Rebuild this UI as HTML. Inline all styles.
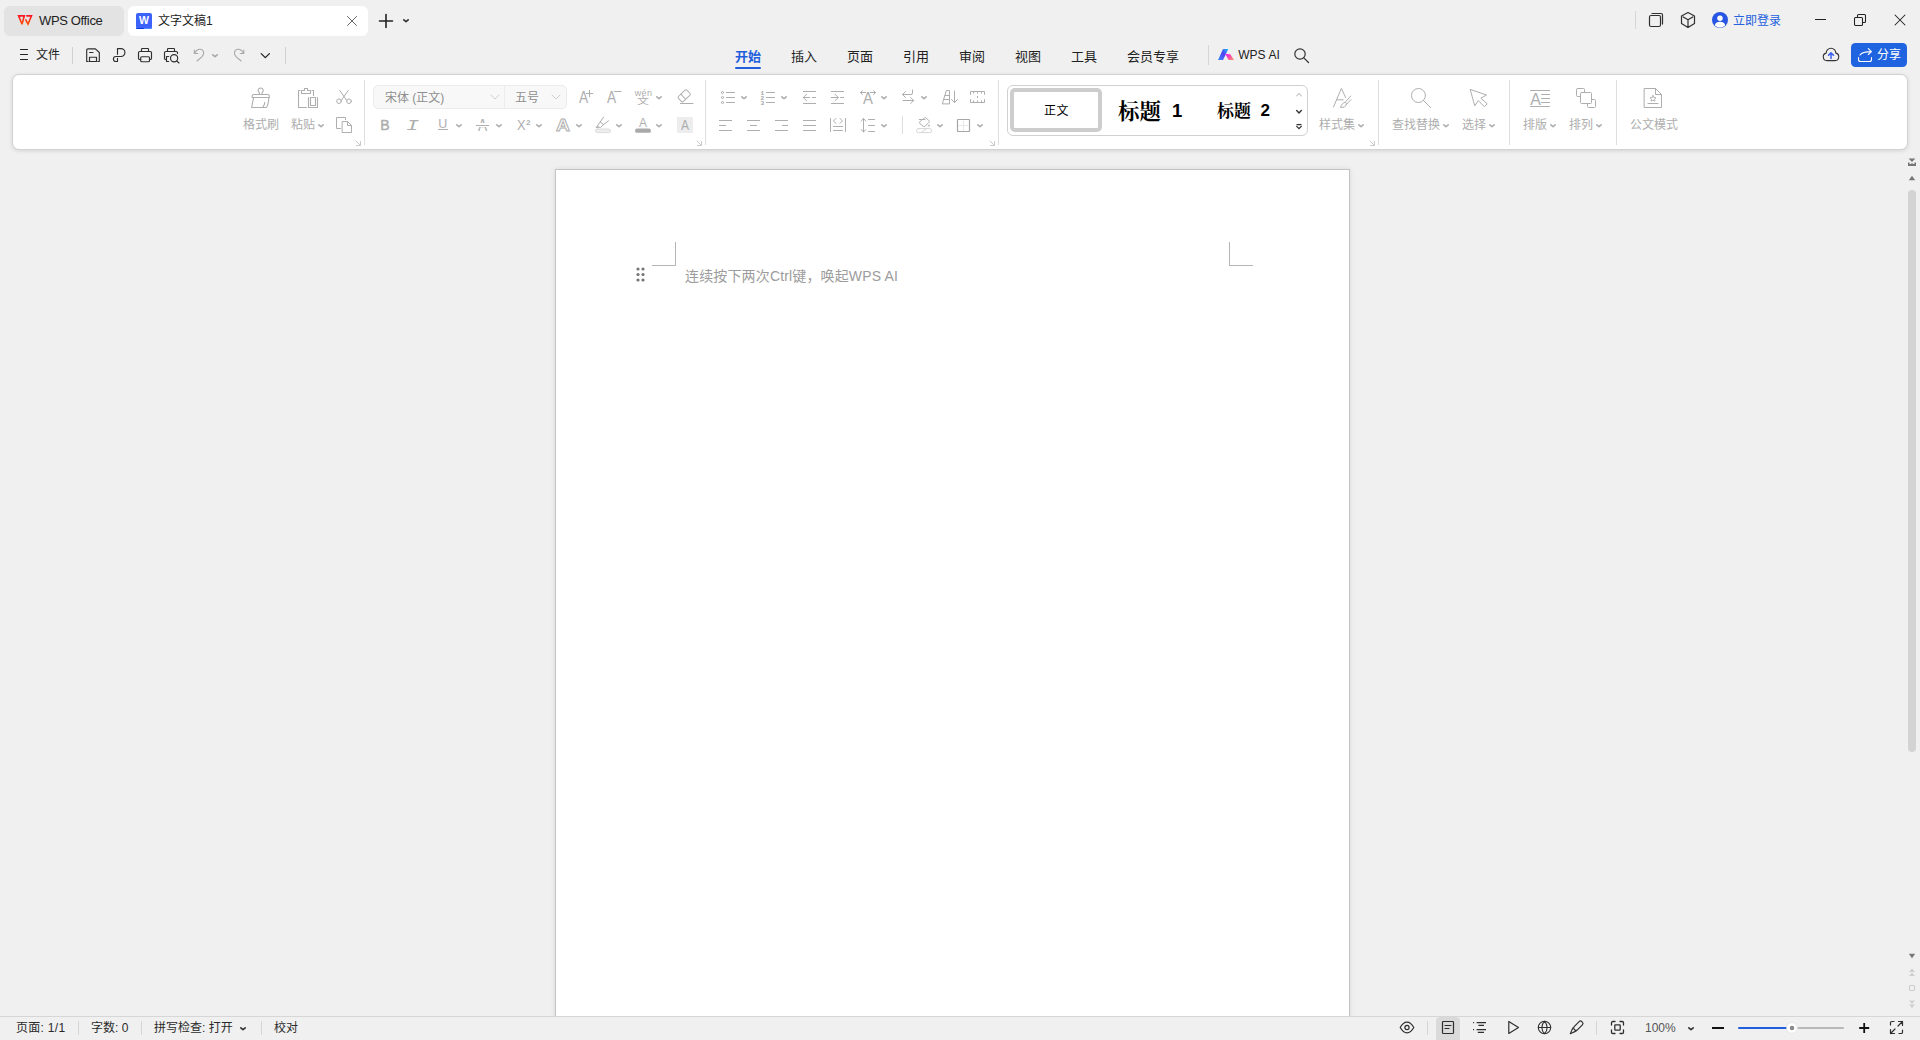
<!DOCTYPE html>
<html lang="zh-CN"><head><meta charset="utf-8"><title>文字文稿1 - WPS Office</title>
<style>
html,body{margin:0;padding:0;}
body{width:1920px;height:1040px;overflow:hidden;background:#f0f0f0;position:relative;font-family:"Liberation Sans","Noto Sans CJK SC",sans-serif;}
.t{position:absolute;white-space:nowrap;display:block;}
.i{position:absolute;display:block;overflow:visible;}
.b{position:absolute;box-sizing:content-box;}
</style></head><body>
<div class="b" style="left:4px;top:6px;width:120px;height:30px;background:#e3e3e3;border-radius:6px;"></div>
<svg class="i" style="left:17px;top:15px;" width="16" height="11" viewBox="0 0 16 11" fill="none" stroke="#f5271d" stroke-width="1" stroke-linecap="round" stroke-linejoin="round"><defs><linearGradient id="wl" x1="0" y1="0" x2="0" y2="1"><stop offset="0" stop-color="#ff1524"/><stop offset="1" stop-color="#ff5200"/></linearGradient></defs><path d="M1.6 0.9 H7.3 L5 9.2 Z" stroke="url(#wl)" stroke-width="1.6" stroke-linejoin="miter" stroke-miterlimit="3" stroke-linecap="butt"/><path d="M9.2 0.9 H14.5 L11 9.2 L8.5 4.4" stroke="url(#wl)" stroke-width="1.6" stroke-linejoin="miter" stroke-miterlimit="3" stroke-linecap="butt"/></svg>
<span class="t" style="left:39px;top:11.0px;font-size:13px;line-height:19px;color:#222;letter-spacing:-.35px;">WPS Office</span>
<div class="b" style="left:128px;top:6px;width:240px;height:30px;background:#ffffff;border-radius:6px;"></div>
<div class="b" style="left:136px;top:13px;width:16px;height:16px;background:#3d62fa;border-radius:2px;"></div>
<div class="b" style="left:136px;top:27.5px;width:8px;height:1.5px;background:#0a3be0;border-radius:0 0 0 2px;"></div>
<div class="b" style="left:144px;top:27.5px;width:8px;height:1.5px;background:#4f88ff;border-radius:0 0 2px 0;"></div>
<span class="t" style="left:136px;top:14.0px;font-size:10.5px;line-height:12px;color:#fff;font-weight:700;width:16px;text-align:center;">W</span>
<span class="t" style="left:158px;top:11.5px;font-size:12px;line-height:18px;color:#222;">文字文稿1</span>
<svg class="i" style="left:345.7px;top:14.5px;" width="12" height="12" viewBox="0 0 12 12" fill="none" stroke="#666" stroke-width="1" stroke-linecap="round" stroke-linejoin="round"><path d="M1.5 1.5 L10.5 10.5 M10.5 1.5 L1.5 10.5"/></svg>
<svg class="i" style="left:378px;top:13px;" width="16" height="16" viewBox="0 0 16 16" fill="none" stroke="#222" stroke-width="1.6" stroke-linecap="round" stroke-linejoin="round"><path d="M8 1.5 V14.5 M1.5 8 H14.5"/></svg>
<svg class="i" style="left:402px;top:18px;" width="8" height="6" viewBox="0 0 8 6" fill="none" stroke="#333" stroke-width="1.7000000000000002" stroke-linecap="round" stroke-linejoin="round"><path d="M1.85 1.85 L4.0 3.55 L6.15 1.85"/></svg>
<div class="b" style="left:1635px;top:11px;width:1px;height:18px;background:#d6d6d6;"></div>
<svg class="i" style="left:1648px;top:12px;" width="16" height="16" viewBox="0 0 16 16" fill="none" stroke="#2f2f2f" stroke-width="1.2" stroke-linecap="round" stroke-linejoin="round"><rect x="1.5" y="3.5" width="11" height="11" rx="1.5"/><path d="M4 1.5 H13 A1.5 1.5 0 0 1 14.5 3 V12"/></svg>
<svg class="i" style="left:1680px;top:11px;" width="16" height="18" viewBox="0 0 16 18" fill="none" stroke="#2f2f2f" stroke-width="1.2" stroke-linecap="round" stroke-linejoin="round"><path d="M8 1.5 L14.5 5 V12.5 L8 16.5 L1.5 12.5 V5 Z M3.2 5.9 L8 8.7 L12.8 5.9 M8 8.7 V16.5"/></svg>
<svg class="i" style="left:1712px;top:12px;" width="16" height="16" viewBox="0 0 16 16" fill="none" stroke="none" stroke-width="1" stroke-linecap="round" stroke-linejoin="round"><circle cx="8" cy="8" r="8" fill="#2856e3" stroke="none"/><circle cx="8" cy="6.2" r="2.7" fill="#fff" stroke="none"/><path d="M2.8 13.2 C3.5 10.6 5.5 9.8 8 9.8 C10.5 9.8 12.5 10.6 13.2 13.2 C11.8 14.8 10 15.5 8 15.5 C6 15.5 4.2 14.8 2.8 13.2 Z" fill="#fff" stroke="none"/></svg>
<span class="t" style="left:1733px;top:11.600000000000001px;font-size:12px;line-height:18px;color:#2462de;">立即登录</span>
<div class="b" style="left:1815px;top:19px;width:11px;height:1px;background:#222;"></div>
<svg class="i" style="left:1853px;top:13px;" width="14" height="14" viewBox="0 0 14 14" fill="none" stroke="#222" stroke-width="1.05" stroke-linecap="round" stroke-linejoin="round"><rect x="1.5" y="4.5" width="8" height="8" rx="1"/><path d="M4.5 4.5 V2.5 A1 1 0 0 1 5.5 1.5 H11.5 A1 1 0 0 1 12.5 2.5 V8.5 A1 1 0 0 1 11.5 9.5 H9.5"/></svg>
<svg class="i" style="left:1894px;top:14px;" width="12" height="12" viewBox="0 0 12 12" fill="none" stroke="#222" stroke-width="1.05" stroke-linecap="round" stroke-linejoin="round"><path d="M1 1 L11 11 M11 1 L1 11"/></svg>
<svg class="i" style="left:18px;top:48px;" width="12" height="14" viewBox="0 0 12 14" fill="none" stroke="#222" stroke-width="1.1" stroke-linecap="round" stroke-linejoin="round"><path d="M2.5 1.5 H9.5 M2.5 6.5 H9.5 M2.5 11.5 H9.5"/></svg>
<span class="t" style="left:36px;top:46.0px;font-size:12px;line-height:18px;color:#222;">文件</span>
<div class="b" style="left:72px;top:47px;width:1px;height:17px;background:#d0d0d0;"></div>
<svg class="i" style="left:85px;top:47px;" width="16" height="16" viewBox="0 0 16 16" fill="none" stroke="#2f2f2f" stroke-width="1.15" stroke-linecap="round" stroke-linejoin="round"><path d="M3.2 14.5 H1.7 V3.2 A1.3 1.3 0 0 1 3 1.9 H10.4 L14.3 5.5 V14.5 H12.8 M4.6 5.5 H8 M4.5 14.5 V10.2 H11.5 V14.5 Z"/></svg>
<svg class="i" style="left:112px;top:47px;" width="14" height="16" viewBox="0 0 14 16" fill="none" stroke="#2f2f2f" stroke-width="1.15" stroke-linecap="round" stroke-linejoin="round"><path d="M5.5 7.3 V1.6 H9 A3.95 3.95 0 0 1 9 9.5 H3.9 A2.5 2.5 0 0 0 3.9 14.5 H5.5 V11.3"/></svg>
<svg class="i" style="left:137px;top:47px;" width="16" height="16" viewBox="0 0 16 16" fill="none" stroke="#2f2f2f" stroke-width="1.15" stroke-linecap="round" stroke-linejoin="round"><path d="M4.5 4.5 V2.3 A.8 .8 0 0 1 5.3 1.5 H10.7 A.8 .8 0 0 1 11.5 2.3 V4.5 M3.7 12.5 H2.8 A1.3 1.3 0 0 1 1.5 11.2 V5.8 A1.3 1.3 0 0 1 2.8 4.5 H13.2 A1.3 1.3 0 0 1 14.5 5.8 V11.2 A1.3 1.3 0 0 1 13.2 12.5 H12.5"/><rect x="3.7" y="9.7" width="8.8" height="5" rx="1"/></svg>
<svg class="i" style="left:163px;top:47px;" width="17" height="16" viewBox="0 0 17 16" fill="none" stroke="#2f2f2f" stroke-width="1.15" stroke-linecap="round" stroke-linejoin="round"><path d="M4.5 4.5 V2.3 A.8 .8 0 0 1 5.3 1.5 H10.7 A.8 .8 0 0 1 11.5 2.3 V4.5 M3 12.5 H2.8 A1.3 1.3 0 0 1 1.5 11.2 V5.8 A1.3 1.3 0 0 1 2.8 4.5 H13.2 A1.3 1.3 0 0 1 14.5 5.8 V6.6 M5.7 9.5 H3.5 V14.5 H5.7"/><circle cx="11.1" cy="11.2" r="3.6"/><path d="M13.8 14 L16 16"/></svg>
<svg class="i" style="left:193px;top:48px;" width="12" height="14" viewBox="0 0 12 14" fill="none" stroke="#a8a8a8" stroke-width="1.1" stroke-linecap="round" stroke-linejoin="round"><path d="M1.3 2 V5.5 H4.8 M1.8 5.2 C3 2.6 5 1.3 6.8 1.3 C9.2 1.3 10.6 3.2 10.6 5.3 C10.6 6.8 9.8 7.8 8.8 8.8 L4 13"/></svg>
<svg class="i" style="left:211px;top:53px;" width="8" height="6" viewBox="0 0 8 6" fill="none" stroke="#a8a8a8" stroke-width="1.6" stroke-linecap="round" stroke-linejoin="round"><path d="M1.8 1.8 L4.0 3.6 L6.2 1.8"/></svg>
<svg class="i" style="left:233px;top:48px;" width="12" height="14" viewBox="0 0 12 14" fill="none" stroke="#a8a8a8" stroke-width="1.1" stroke-linecap="round" stroke-linejoin="round"><path d="M10.8 2 V5.5 H7.3 M10.3 5.2 C9.1 2.6 7.1 1.3 5.3 1.3 C2.9 1.3 1.5 3.2 1.5 5.3 C1.5 6.8 2.3 7.8 3.3 8.8 L8.1 13"/></svg>
<svg class="i" style="left:259px;top:51px;" width="12" height="8" viewBox="0 0 12 8" fill="none" stroke="#222" stroke-width="1.3" stroke-linecap="round" stroke-linejoin="round"><path d="M2.2 2.6 L6.3 6.6 L10.4 2.6"/></svg>
<div class="b" style="left:285px;top:47px;width:1px;height:17px;background:#d0d0d0;"></div>
<span class="t" style="left:735px;top:46.5px;font-size:13px;line-height:19px;color:#1f5fdd;font-weight:700;">开始</span>
<span class="t" style="left:791px;top:46.5px;font-size:13px;line-height:19px;color:#222;">插入</span>
<span class="t" style="left:847px;top:46.5px;font-size:13px;line-height:19px;color:#222;">页面</span>
<span class="t" style="left:903px;top:46.5px;font-size:13px;line-height:19px;color:#222;">引用</span>
<span class="t" style="left:959px;top:46.5px;font-size:13px;line-height:19px;color:#222;">审阅</span>
<span class="t" style="left:1015px;top:46.5px;font-size:13px;line-height:19px;color:#222;">视图</span>
<span class="t" style="left:1071px;top:46.5px;font-size:13px;line-height:19px;color:#222;">工具</span>
<span class="t" style="left:1127px;top:46.5px;font-size:13px;line-height:19px;color:#222;">会员专享</span>
<div class="b" style="left:735px;top:67px;width:26px;height:2px;background:#1f5fdd;border-radius:1px;"></div>
<div class="b" style="left:1208px;top:45px;width:1px;height:20px;background:#d6d6d6;"></div>
<svg class="i" style="left:1217px;top:47px;" width="18" height="15" viewBox="0 0 18 15" fill="none" stroke="none" stroke-width="1" stroke-linecap="round" stroke-linejoin="round"><defs><linearGradient id="ai0" x1="0" y1="1" x2="1" y2="0"><stop offset="0" stop-color="#3a8dff"/><stop offset=".55" stop-color="#5140f2"/><stop offset="1" stop-color="#12c0ff"/></linearGradient><linearGradient id="ai1" x1="0" y1="0" x2="1" y2="1"><stop offset="0" stop-color="#f50cf0"/><stop offset="1" stop-color="#ff9460"/></linearGradient></defs><path d="M1 13 L6 2 H11.3 L6 13 Z" fill="url(#ai0)" stroke="none"/><path d="M8.4 7 L13.3 7.3 L17 13 H11.6 Z" fill="url(#ai1)" stroke="none"/></svg>
<span class="t" style="left:1238.2px;top:46.0px;font-size:12px;line-height:18px;color:#222;word-spacing:.2px;">WPS AI</span>
<svg class="i" style="left:1293px;top:47px;" width="17" height="17" viewBox="0 0 17 17" fill="none" stroke="#333" stroke-width="1.2" stroke-linecap="round" stroke-linejoin="round"><circle cx="7" cy="7" r="5.2"/><path d="M10.8 10.8 L15.5 15.5"/></svg>
<svg class="i" style="left:1822px;top:47px;" width="18" height="15" viewBox="0 0 18 15" fill="none" stroke="#333" stroke-width="1.1" stroke-linecap="round" stroke-linejoin="round"><path d="M5 13.6 A3.8 3.8 0 0 1 4.2 6.1 A4.8 4.8 0 1 1 13.8 6.1 A3.8 3.8 0 0 1 13 13.6 Z" stroke="#333"/><path d="M9 11.6 V6.4 M6.5 8.3 L9 5.8 L11.5 8.3" stroke="#3b5cf0" stroke-width="1.5"/></svg>
<div class="b" style="left:1851px;top:43px;width:56px;height:24px;background:#1f63e0;border-radius:4.5px;"></div>
<svg class="i" style="left:1857px;top:48px;" width="16" height="15" viewBox="0 0 16 15" fill="none" stroke="#fff" stroke-width="1.1" stroke-linecap="round" stroke-linejoin="round"><path d="M1.5 9.5 V11.5 A2 2 0 0 0 3.5 13.5 H12.5 A2 2 0 0 0 14.5 11.5 V9.5 M3 7 C4.6 4.6 8 3.6 14 3.6 M11.3 0.7 L14.4 3.6 L11.3 6.5"/></svg>
<span class="t" style="left:1877px;top:46.0px;font-size:12px;line-height:18px;color:#fff;">分享</span>
<div class="b" style="left:12px;top:74px;width:1894px;height:74px;background:#fff;border:1px solid #d2d2d2;border-radius:7px;box-shadow:0 1px 4px rgba(0,0,0,.12);"></div>
<svg class="i" style="left:250px;top:87px;" width="22" height="22" viewBox="0 0 22 22" fill="none" stroke="#aeaeae" stroke-width="1.1" stroke-linecap="round" stroke-linejoin="round"><path d="M9.4 7.5 V5.6 A2.5 2.5 0 1 1 12 5.6 V7.5 M3.5 7.5 H18 A1.3 1.3 0 0 1 19.3 8.8 V10.5 H2.2 V8.8 A1.3 1.3 0 0 1 3.5 7.5 Z M6 10.5 H15.5 M3.6 10.5 L1.6 20.5 H16.4 C18 18.4 18.6 15 18.8 10.5 M12.6 20.5 C14 19 14.6 17.4 14.8 15.4"/></svg>
<span class="t" style="left:243px;top:116.0px;font-size:12px;line-height:18px;color:#adadad;">格式刷</span>
<svg class="i" style="left:297px;top:87px;" width="22" height="22" viewBox="0 0 22 22" fill="none" stroke="#aeaeae" stroke-width="1.1" stroke-linecap="round" stroke-linejoin="round"><path d="M3 3.5 H1.5 V20.5 H9.5 M15 3.5 H16.5 V8.5 M4.5 6.5 V3.5 H7.5 V1.5 H10.5 V3.5 H13.5 V6.5 Z M11.5 10.5 V20.5 H20.5 V10.5"/><rect x="13.5" y="10.5" width="5" height="8"/></svg>
<span class="t" style="left:291px;top:116.0px;font-size:12px;line-height:18px;color:#adadad;">粘贴</span>
<svg class="i" style="left:317px;top:122.5px;" width="8" height="6" viewBox="0 0 8 6" fill="none" stroke="#aeaeae" stroke-width="1.6" stroke-linecap="round" stroke-linejoin="round"><path d="M1.8 1.8 L4.0 3.6 L6.2 1.8"/></svg>
<svg class="i" style="left:335px;top:89px;" width="18" height="16" viewBox="0 0 18 16" fill="none" stroke="#aeaeae" stroke-width="1" stroke-linecap="round" stroke-linejoin="round"><path d="M4.8 1.5 L11.6 11.2 M13.2 1.5 L6.4 11.2"/><circle cx="4" cy="12.2" r="2.3"/><circle cx="14" cy="12.2" r="2.3"/></svg>
<svg class="i" style="left:335px;top:116px;" width="18" height="18" viewBox="0 0 18 18" fill="none" stroke="#aeaeae" stroke-width="1" stroke-linecap="round" stroke-linejoin="round"><path d="M5.5 12.5 H1.5 V1.5 H10.5 V3.5"/><path d="M7.5 5.5 H12.5 L16.5 9.5 V16.5 H7.5 Z M12.5 5.5 V9.5 H16.5"/></svg>
<svg class="i" style="left:355px;top:140px;" width="6" height="6" viewBox="0 0 6 6" fill="none" stroke="#c4c4c4" stroke-width="0.9" stroke-linecap="round" stroke-linejoin="round"><path d="M1 1 L5 5 M5.5 1.5 V5.5 H1.5"/></svg>
<div class="b" style="left:364px;top:80px;width:1px;height:65px;background:#dedede;"></div>
<div class="b" style="left:373px;top:85px;width:192px;height:22px;background:#f8f8f8;border:1px solid #ebebeb;border-radius:5px;"></div>
<div class="b" style="left:504px;top:86px;width:1px;height:22px;background:#ececec;"></div>
<span class="t" style="left:385px;top:89.0px;font-size:12px;line-height:18px;color:#8e8e8e;">宋体 (正文)</span>
<svg class="i" style="left:490px;top:94px;" width="10" height="6" viewBox="0 0 10 6" fill="none" stroke="#cfcfcf" stroke-width="1" stroke-linecap="round" stroke-linejoin="round"><path d="M1 1 L5 5 L9 1"/></svg>
<span class="t" style="left:515px;top:89.0px;font-size:12px;line-height:18px;color:#8e8e8e;">五号</span>
<svg class="i" style="left:551px;top:94px;" width="10" height="6" viewBox="0 0 10 6" fill="none" stroke="#cfcfcf" stroke-width="1" stroke-linecap="round" stroke-linejoin="round"><path d="M1 1 L5 5 L9 1"/></svg>
<span class="t" style="left:578.8px;top:87.75px;font-size:16.5px;line-height:18.5px;color:#aeaeae;transform:scaleX(0.83);transform-origin:left center;">A</span>
<svg class="i" style="left:586px;top:90px;" width="8" height="8" viewBox="0 0 8 8" fill="none" stroke="#aeaeae" stroke-width="1" stroke-linecap="round" stroke-linejoin="round"><path d="M0.5 3.5 H6.8 M3.5 0.3 V6.8"/></svg>
<span class="t" style="left:606.8px;top:87.75px;font-size:16.5px;line-height:18.5px;color:#aeaeae;transform:scaleX(0.83);transform-origin:left center;">A</span>
<svg class="i" style="left:614px;top:89px;" width="8" height="4" viewBox="0 0 8 4" fill="none" stroke="#aeaeae" stroke-width="1" stroke-linecap="round" stroke-linejoin="round"><path d="M0.5 2.5 H7"/></svg>
<span class="t" style="left:637px;top:95.0px;font-size:12px;line-height:12px;color:#aeaeae;transform:scaleY(.74);">文</span>
<span class="t" style="left:634.8px;top:87.8px;font-size:9px;line-height:10px;color:#aeaeae;letter-spacing:.3px;">wén</span>
<svg class="i" style="left:655px;top:95px;" width="8" height="6" viewBox="0 0 8 6" fill="none" stroke="#aeaeae" stroke-width="1.6" stroke-linecap="round" stroke-linejoin="round"><path d="M1.8 1.8 L4.0 3.6 L6.2 1.8"/></svg>
<svg class="i" style="left:676px;top:89px;" width="18" height="16" viewBox="0 0 18 16" fill="none" stroke="#aeaeae" stroke-width="1" stroke-linecap="round" stroke-linejoin="round"><g transform="rotate(-43 8.2 6.8)"><rect x="2.3" y="3.3" width="11.8" height="7" rx="1.5"/><path d="M6.9 3.3 V10.3"/></g><path d="M4.5 14.5 H17"/></svg>
<span class="t" style="left:380.3px;top:116.8px;font-size:14px;line-height:16px;color:#aeaeae;-webkit-text-stroke:.5px #aeaeae;">B</span>
<span class="t" style="left:405.5px;top:118.5px;font-size:15px;line-height:16px;color:#aeaeae;font-family:'Liberation Mono',monospace;font-style:italic;transform:scaleX(1.45);transform-origin:left center;">I</span>
<span class="t" style="left:438.3px;top:117.1px;font-size:12.5px;line-height:14px;color:#aeaeae;">U</span>
<div class="b" style="left:438px;top:129px;width:10px;height:1px;background:#aeaeae;"></div>
<svg class="i" style="left:455px;top:122.5px;" width="8" height="6" viewBox="0 0 8 6" fill="none" stroke="#aeaeae" stroke-width="1.6" stroke-linecap="round" stroke-linejoin="round"><path d="M1.8 1.8 L4.0 3.6 L6.2 1.8"/></svg>
<span class="t" style="left:477.9px;top:115.75px;font-size:16.5px;line-height:18.5px;color:#aeaeae;transform:scaleX(0.83);transform-origin:left center;">A</span>
<div class="b" style="left:475px;top:123px;width:15px;height:4px;background:#fff;"></div>
<div class="b" style="left:476px;top:124.5px;width:13px;height:1px;background:#aeaeae;"></div>
<svg class="i" style="left:495px;top:122.5px;" width="8" height="6" viewBox="0 0 8 6" fill="none" stroke="#aeaeae" stroke-width="1.6" stroke-linecap="round" stroke-linejoin="round"><path d="M1.8 1.8 L4.0 3.6 L6.2 1.8"/></svg>
<span class="t" style="left:517px;top:117.3px;font-size:15.5px;line-height:16px;color:#aeaeae;transform:scaleX(.82);transform-origin:left center;">X</span>
<span class="t" style="left:526.2px;top:118.1px;font-size:7.5px;line-height:9px;color:#aeaeae;font-weight:700;">2</span>
<svg class="i" style="left:535px;top:122.5px;" width="8" height="6" viewBox="0 0 8 6" fill="none" stroke="#aeaeae" stroke-width="1.6" stroke-linecap="round" stroke-linejoin="round"><path d="M1.8 1.8 L4.0 3.6 L6.2 1.8"/></svg>
<svg class="i" style="left:554px;top:116px" width="18" height="18"><text x="7.9" y="14.6" text-anchor="middle" font-family="Liberation Sans,sans-serif" font-weight="700" font-size="17" fill="#fff" stroke="#aeaeae" stroke-width="0.9" transform="scale(1.14 1)">A</text></svg>
<svg class="i" style="left:575px;top:122.5px;" width="8" height="6" viewBox="0 0 8 6" fill="none" stroke="#aeaeae" stroke-width="1.6" stroke-linecap="round" stroke-linejoin="round"><path d="M1.8 1.8 L4.0 3.6 L6.2 1.8"/></svg>
<svg class="i" style="left:594px;top:116px;" width="18" height="18" viewBox="0 0 18 18" fill="none" stroke="#aeaeae" stroke-width="1" stroke-linecap="round" stroke-linejoin="round"><path d="M3 10.5 L6.2 6 L9.6 8.6 L6.8 11.2 Z M6.2 6 L9.5 1.2 M9.6 8.6 L14.5 4.8 M2.2 11.6 L4.4 11"/><rect x="1.5" y="13" width="15" height="3.6" rx="1.8" fill="#ededed" stroke="#dcdcdc"/></svg>
<svg class="i" style="left:615px;top:122.5px;" width="8" height="6" viewBox="0 0 8 6" fill="none" stroke="#aeaeae" stroke-width="1.6" stroke-linecap="round" stroke-linejoin="round"><path d="M1.8 1.8 L4.0 3.6 L6.2 1.8"/></svg>
<svg class="i" style="left:634px;top:116px;" width="18" height="18" viewBox="0 0 18 18" fill="none" stroke="#aeaeae" stroke-width="1" stroke-linecap="round" stroke-linejoin="round"><rect x="1.2" y="12.6" width="15.6" height="4.2" rx="1.6" fill="#a9a9a9" stroke="none"/></svg>
<span class="t" style="left:639px;top:114.5px;font-size:13px;line-height:15px;color:#aeaeae;transform:scaleX(0.92);transform-origin:left center;">A</span>
<svg class="i" style="left:655px;top:122.5px;" width="8" height="6" viewBox="0 0 8 6" fill="none" stroke="#aeaeae" stroke-width="1.6" stroke-linecap="round" stroke-linejoin="round"><path d="M1.8 1.8 L4.0 3.6 L6.2 1.8"/></svg>
<div class="b" style="left:677px;top:117px;width:16px;height:16px;background:#ededed;"></div>
<span class="t" style="left:681px;top:117.0px;font-size:14px;line-height:16px;color:#aeaeae;transform:scaleX(0.86);transform-origin:left center;">A</span>
<svg class="i" style="left:696px;top:140px;" width="6" height="6" viewBox="0 0 6 6" fill="none" stroke="#c4c4c4" stroke-width="0.9" stroke-linecap="round" stroke-linejoin="round"><path d="M1 1 L5 5 M5.5 1.5 V5.5 H1.5"/></svg>
<div class="b" style="left:705px;top:80px;width:1px;height:65px;background:#dedede;"></div>
<svg class="i" style="left:720px;top:90px;" width="16" height="16" viewBox="0 0 16 16" fill="none" stroke="#aeaeae" stroke-width="1" stroke-linecap="round" stroke-linejoin="round"><circle cx="2.5" cy="2.5" r="1.1"/><circle cx="2.5" cy="7.5" r="1.1"/><circle cx="2.5" cy="12.5" r="1.1"/><path d="M6 2.5 H15 M6 7.5 H15 M6 12.5 H15" stroke-linecap="butt"/></svg>
<svg class="i" style="left:740px;top:95px;" width="8" height="6" viewBox="0 0 8 6" fill="none" stroke="#aeaeae" stroke-width="1.6" stroke-linecap="round" stroke-linejoin="round"><path d="M1.8 1.8 L4.0 3.6 L6.2 1.8"/></svg>
<svg class="i" style="left:760px;top:90px;" width="16" height="16" viewBox="0 0 16 16" fill="none" stroke="#aeaeae" stroke-width="1" stroke-linecap="round" stroke-linejoin="round"><path d="M6 2.5 H15 M6 7.5 H15 M6 12.5 H15" stroke-linecap="butt"/><g font-family="Liberation Mono,monospace" font-weight="700" font-size="6.2" fill="#a4a4a4" stroke="none"><text x="0.6" y="4.6">1</text><text x="0.6" y="9.6">2</text><text x="0.6" y="14.6">3</text></g></svg>
<svg class="i" style="left:780px;top:95px;" width="8" height="6" viewBox="0 0 8 6" fill="none" stroke="#aeaeae" stroke-width="1.6" stroke-linecap="round" stroke-linejoin="round"><path d="M1.8 1.8 L4.0 3.6 L6.2 1.8"/></svg>
<svg class="i" style="left:802px;top:90px;" width="16" height="16" viewBox="0 0 16 16" fill="none" stroke="#aeaeae" stroke-width="1" stroke-linecap="round" stroke-linejoin="round"><path d="M1 1.5 H14 M1 13.5 H14 M10 7.5 H14" stroke-linecap="butt"/><path d="M7.6 7.5 H1.4 M4.6 4.2 L1.3 7.5 L4.6 10.8"/></svg>
<svg class="i" style="left:830px;top:90px;" width="16" height="16" viewBox="0 0 16 16" fill="none" stroke="#aeaeae" stroke-width="1" stroke-linecap="round" stroke-linejoin="round"><path d="M1 1.5 H14 M1 13.5 H14 M10.2 7.5 H14" stroke-linecap="butt"/><path d="M1.2 7.5 H8.2 M5 4.2 L8.3 7.5 L5 10.8"/></svg>
<svg class="i" style="left:859px;top:89px;" width="18" height="16" viewBox="0 0 18 16" fill="none" stroke="#aeaeae" stroke-width="1" stroke-linecap="round" stroke-linejoin="round"><path d="M1.5 3.5 H6.5 M3.3 1.7 L1.5 3.5 L3.3 5.3 M11.5 3.5 H16.5 M14.7 1.7 L16.5 3.5 L14.7 5.3"/></svg>
<span class="t" style="left:863px;top:89.8px;font-size:16.5px;line-height:17px;color:#aeaeae;transform:scaleX(.9);transform-origin:left center;">A</span>
<svg class="i" style="left:880px;top:95px;" width="8" height="6" viewBox="0 0 8 6" fill="none" stroke="#aeaeae" stroke-width="1.6" stroke-linecap="round" stroke-linejoin="round"><path d="M1.8 1.8 L4.0 3.6 L6.2 1.8"/></svg>
<svg class="i" style="left:901px;top:89px;" width="15" height="16" viewBox="0 0 15 16" fill="none" stroke="#aeaeae" stroke-width="1" stroke-linecap="round" stroke-linejoin="round"><path d="M11.5 1 V4 A1.5 1.5 0 0 1 10 5.5 H1.5 M4.5 2.5 L1.5 5.5 L4.5 8.5 M2 11.5 H12.7 M9.7 8.5 L12.7 11.5 L9.7 14.5"/></svg>
<svg class="i" style="left:920px;top:95px;" width="8" height="6" viewBox="0 0 8 6" fill="none" stroke="#aeaeae" stroke-width="1.6" stroke-linecap="round" stroke-linejoin="round"><path d="M1.8 1.8 L4.0 3.6 L6.2 1.8"/></svg>
<svg class="i" style="left:941px;top:89px;" width="18" height="16" viewBox="0 0 18 16" fill="none" stroke="#aeaeae" stroke-width="1" stroke-linecap="round" stroke-linejoin="round"><path d="M1.4 14.5 L5.3 1.5 H8.5 V14.5 Z M4.2 6.5 H8.5 M2.8 10.5 H8.5 M13.5 2 V13.5 M10.5 10.5 L13.5 13.6 L16.5 10.5"/></svg>
<svg class="i" style="left:969px;top:90px;" width="17" height="14" viewBox="0 0 17 14" fill="none" stroke="#aeaeae" stroke-width="1" stroke-linecap="round" stroke-linejoin="round"><path d="M1.5 4.8 V1.5 H15.5 V4.8 M4.5 1.5 V3.5 M8.5 1.5 V3.5 M12.5 1.5 V3.5 M1.5 9.2 V12.5 H15.5 V9.2 M4.5 12.5 V10.5 M8.5 12.5 V10.5 M12.5 12.5 V10.5 M8.5 6 V8" stroke-linecap="butt" stroke-linejoin="miter"/></svg>
<svg class="i" style="left:718px;top:119px;" width="16" height="13" viewBox="0 0 16 13" fill="none" stroke="#aeaeae" stroke-width="1" stroke-linecap="round" stroke-linejoin="round"><path d="M1 1.5 H14 M1 6.5 H8 M1 11.5 H14 " stroke-linecap="butt"/></svg>
<svg class="i" style="left:746px;top:119px;" width="16" height="13" viewBox="0 0 16 13" fill="none" stroke="#aeaeae" stroke-width="1" stroke-linecap="round" stroke-linejoin="round"><path d="M1 1.5 H14 M4 6.5 H11 M1 11.5 H14 " stroke-linecap="butt"/></svg>
<svg class="i" style="left:774px;top:119px;" width="16" height="13" viewBox="0 0 16 13" fill="none" stroke="#aeaeae" stroke-width="1" stroke-linecap="round" stroke-linejoin="round"><path d="M1 1.5 H14 M8 6.5 H14 M1 11.5 H14 " stroke-linecap="butt"/></svg>
<svg class="i" style="left:802px;top:119px;" width="16" height="13" viewBox="0 0 16 13" fill="none" stroke="#aeaeae" stroke-width="1" stroke-linecap="round" stroke-linejoin="round"><path d="M1 1.5 H14 M1 6.5 H14 M1 11.5 H14 " stroke-linecap="butt"/></svg>
<svg class="i" style="left:829px;top:117px;" width="18" height="16" viewBox="0 0 18 16" fill="none" stroke="#aeaeae" stroke-width="1" stroke-linecap="round" stroke-linejoin="round"><path d="M1.5 1.5 V14.5 M16.5 1.5 V14.5 M4.5 9.5 H13.5 M4.5 13.5 H13.5 M7 1.4 L4.6 3.9 L7 6.4 M11 1.4 L13.4 3.9 L11 6.4"/></svg>
<svg class="i" style="left:860px;top:117px;" width="16" height="16" viewBox="0 0 16 16" fill="none" stroke="#aeaeae" stroke-width="1" stroke-linecap="round" stroke-linejoin="round"><path d="M3.5 1.5 V15 M1.2 4 L3.5 1.5 L5.8 4 M1.2 12.5 L3.5 15 L5.8 12.5 M8.5 2.5 H14.5 M8.5 8.5 H14.5 M8.5 14.5 H14.5"/></svg>
<svg class="i" style="left:880px;top:122.5px;" width="8" height="6" viewBox="0 0 8 6" fill="none" stroke="#aeaeae" stroke-width="1.6" stroke-linecap="round" stroke-linejoin="round"><path d="M1.8 1.8 L4.0 3.6 L6.2 1.8"/></svg>
<div class="b" style="left:902px;top:116px;width:1px;height:18px;background:#dedede;"></div>
<svg class="i" style="left:915px;top:116px;" width="18" height="18" viewBox="0 0 18 18" fill="none" stroke="#aeaeae" stroke-width="1" stroke-linecap="round" stroke-linejoin="round"><path d="M6.5 4.3 L4.9 5.9 A1.2 1.2 0 0 0 4.9 7.6 L8.3 10.3 A1.2 1.2 0 0 0 10 10.3 L13.9 6.4 A1.2 1.2 0 0 0 13.9 4.7 L11.2 1.9 A1.2 1.2 0 0 0 9.5 1.9 L8 3.5 M4.3 3.5 H10"/><path d="M14 8.8 V10.4" stroke-width="1.5" stroke-linecap="butt"/><rect x="1.5" y="12.6" width="15.2" height="4" rx="2" stroke="#d6d6d6"/><path d="M6.5 16.3 L11.2 13" stroke="#d6d6d6"/></svg>
<svg class="i" style="left:936px;top:122.5px;" width="8" height="6" viewBox="0 0 8 6" fill="none" stroke="#aeaeae" stroke-width="1.6" stroke-linecap="round" stroke-linejoin="round"><path d="M1.8 1.8 L4.0 3.6 L6.2 1.8"/></svg>
<svg class="i" style="left:956px;top:118px;" width="15" height="15" viewBox="0 0 15 15" fill="none" stroke="#a6a6a6" stroke-width="1.2" stroke-linecap="round" stroke-linejoin="round"><rect x="1.5" y="1.5" width="12" height="12" rx="0.5"/><path d="M7.5 3 V12 M3 7.5 H12" stroke="#e6e6e6" stroke-dasharray="1 1"/></svg>
<svg class="i" style="left:976px;top:122.5px;" width="8" height="6" viewBox="0 0 8 6" fill="none" stroke="#aeaeae" stroke-width="1.6" stroke-linecap="round" stroke-linejoin="round"><path d="M1.8 1.8 L4.0 3.6 L6.2 1.8"/></svg>
<svg class="i" style="left:989px;top:140px;" width="6" height="6" viewBox="0 0 6 6" fill="none" stroke="#c4c4c4" stroke-width="0.9" stroke-linecap="round" stroke-linejoin="round"><path d="M1 1 L5 5 M5.5 1.5 V5.5 H1.5"/></svg>
<div class="b" style="left:998px;top:80px;width:1px;height:65px;background:#dedede;"></div>
<div class="b" style="left:1007px;top:85px;width:299px;height:49px;background:#fff;border:1px solid #d0d0d0;border-radius:6px;"></div>
<div class="b" style="left:1010px;top:88px;width:84px;height:36px;border:4px solid #cdcdcd;border-radius:5px;"></div>
<span class="t" style="left:1044px;top:102.5px;font-size:12px;line-height:16px;color:#000;letter-spacing:.4px;">正文</span>
<span class="t" style="left:1118px;top:98.5px;font-size:21.5px;line-height:26px;color:#000;font-weight:700;font-family:'Liberation Serif','Noto Serif CJK SC',serif;">标题 <span style="font-family:'Liberation Sans',sans-serif;position:relative;font-size:18.5px;margin-left:5.6px;top:-1.3px;">1</span></span>
<span class="t" style="left:1217px;top:100.5px;font-size:17px;line-height:22px;color:#000;font-weight:700;font-family:'Liberation Serif','Noto Serif CJK SC',serif;">标题 <span style="font-family:'Liberation Sans',sans-serif;position:relative;font-size:17px;margin-left:5.2px;top:-.8px;">2</span></span>
<svg class="i" style="left:1295px;top:92px;" width="8" height="5" viewBox="0 0 8 5" fill="none" stroke="#c8c8c8" stroke-width="1.2" stroke-linecap="round" stroke-linejoin="round"><path d="M1.7 3.8 L4 1.5 L6.3 3.8"/></svg>
<svg class="i" style="left:1295px;top:109px;" width="8" height="5" viewBox="0 0 8 5" fill="none" stroke="#333" stroke-width="1.4" stroke-linecap="round" stroke-linejoin="round"><path d="M1.7 1.6 L4 3.9 L6.3 1.6"/></svg>
<svg class="i" style="left:1295px;top:123px;" width="8" height="7" viewBox="0 0 8 7" fill="none" stroke="#333" stroke-width="1.3" stroke-linecap="round" stroke-linejoin="round"><path d="M1.5 1.6 H6.5" stroke-linecap="butt"/><path d="M1.7 3.4 L4 5.6 L6.3 3.4"/></svg>
<svg class="i" style="left:1332px;top:87px;" width="20" height="22" viewBox="0 0 20 22" fill="none" stroke="#aeaeae" stroke-width="1" stroke-linecap="round" stroke-linejoin="round"><path d="M1.5 20 L9.4 1.4 L13.6 10.5 M4.8 12.8 H11.2"/><path d="M18.8 9 L13 15.4 M19 12.6 L14.6 17.2 M13 15.4 C10.8 15.6 10 17.2 8.4 20.4 C12 20.6 14 19.4 14.6 17.2 Z"/></svg>
<span class="t" style="left:1319px;top:116.0px;font-size:12px;line-height:18px;color:#adadad;">样式集</span>
<svg class="i" style="left:1357px;top:122.5px;" width="8" height="6" viewBox="0 0 8 6" fill="none" stroke="#aeaeae" stroke-width="1.6" stroke-linecap="round" stroke-linejoin="round"><path d="M1.8 1.8 L4.0 3.6 L6.2 1.8"/></svg>
<svg class="i" style="left:1369px;top:140px;" width="6" height="6" viewBox="0 0 6 6" fill="none" stroke="#c4c4c4" stroke-width="0.9" stroke-linecap="round" stroke-linejoin="round"><path d="M1 1 L5 5 M5.5 1.5 V5.5 H1.5"/></svg>
<div class="b" style="left:1378px;top:80px;width:1px;height:65px;background:#dedede;"></div>
<svg class="i" style="left:1410px;top:87px;" width="22" height="22" viewBox="0 0 22 22" fill="none" stroke="#aeaeae" stroke-width="1" stroke-linecap="round" stroke-linejoin="round"><circle cx="8.5" cy="8.5" r="7"/><path d="M13.5 13.5 L20.5 20.5"/></svg>
<span class="t" style="left:1392px;top:116.0px;font-size:12px;line-height:18px;color:#adadad;">查找替换</span>
<svg class="i" style="left:1442px;top:122.5px;" width="8" height="6" viewBox="0 0 8 6" fill="none" stroke="#aeaeae" stroke-width="1.6" stroke-linecap="round" stroke-linejoin="round"><path d="M1.8 1.8 L4.0 3.6 L6.2 1.8"/></svg>
<svg class="i" style="left:1469px;top:88px;" width="20" height="20" viewBox="0 0 20 20" fill="none" stroke="#aeaeae" stroke-width="1" stroke-linecap="round" stroke-linejoin="round"><path d="M1.5 1.5 L17.5 7 L11.8 10.2 L18.2 15.8 L15.4 18.6 L9.2 12.6 L6 17.5 Z"/></svg>
<span class="t" style="left:1462px;top:116.0px;font-size:12px;line-height:18px;color:#adadad;">选择</span>
<svg class="i" style="left:1488px;top:122.5px;" width="8" height="6" viewBox="0 0 8 6" fill="none" stroke="#aeaeae" stroke-width="1.6" stroke-linecap="round" stroke-linejoin="round"><path d="M1.8 1.8 L4.0 3.6 L6.2 1.8"/></svg>
<div class="b" style="left:1509px;top:80px;width:1px;height:65px;background:#dedede;"></div>
<svg class="i" style="left:1529px;top:89px;" width="22" height="19" viewBox="0 0 22 19" fill="none" stroke="#aeaeae" stroke-width="1" stroke-linecap="round" stroke-linejoin="round"><path d="M1.5 1.5 H20.5 M1.5 17.5 H20.5 M12.5 5.5 H20.5 M12.5 9.5 H20.5 M12.5 13.5 H20.5"/></svg>
<span class="t" style="left:1530.3px;top:91.0px;font-size:16px;line-height:17px;color:#aeaeae;">A</span>
<span class="t" style="left:1523px;top:116.0px;font-size:12px;line-height:18px;color:#adadad;">排版</span>
<svg class="i" style="left:1549px;top:122.5px;" width="8" height="6" viewBox="0 0 8 6" fill="none" stroke="#aeaeae" stroke-width="1.6" stroke-linecap="round" stroke-linejoin="round"><path d="M1.8 1.8 L4.0 3.6 L6.2 1.8"/></svg>
<svg class="i" style="left:1575px;top:87px;" width="22" height="22" viewBox="0 0 22 22" fill="none" stroke="#aeaeae" stroke-width="1" stroke-linecap="round" stroke-linejoin="round"><rect x="1.5" y="1.5" width="8" height="8" rx="1"/><rect x="12.5" y="12.5" width="8" height="8" rx="1"/><rect x="5.5" y="5.5" width="11" height="11" rx="1" fill="#fff"/></svg>
<span class="t" style="left:1569px;top:116.0px;font-size:12px;line-height:18px;color:#adadad;">排列</span>
<svg class="i" style="left:1595px;top:122.5px;" width="8" height="6" viewBox="0 0 8 6" fill="none" stroke="#aeaeae" stroke-width="1.6" stroke-linecap="round" stroke-linejoin="round"><path d="M1.8 1.8 L4.0 3.6 L6.2 1.8"/></svg>
<div class="b" style="left:1616px;top:80px;width:1px;height:65px;background:#dedede;"></div>
<svg class="i" style="left:1643px;top:87px;" width="20" height="22" viewBox="0 0 20 22" fill="none" stroke="#aeaeae" stroke-width="1" stroke-linecap="round" stroke-linejoin="round"><path d="M1.5 1.5 H12.5 L18.5 7.5 V20.5 H1.5 Z M12.5 1.5 V7.5 H18.5 M5 16.5 H15"/><path d="M10 8.6 L10.9 10.5 L13 10.8 L11.5 12.2 L11.9 14.2 L10 13.2 L8.1 14.2 L8.5 12.2 L7 10.8 L9.1 10.5 Z" stroke-width="0.9"/></svg>
<span class="t" style="left:1630px;top:116.0px;font-size:12px;line-height:18px;color:#adadad;">公文模式</span>
<div class="b" style="left:555px;top:169px;width:793px;height:860px;background:#fff;border:1px solid #c4c4c4;box-shadow:0 0 5px rgba(0,0,0,.10);"></div>
<div class="b" style="left:675px;top:242px;width:1px;height:24px;background:#b5b5b5;"></div>
<div class="b" style="left:652px;top:265px;width:24px;height:1px;background:#b5b5b5;"></div>
<div class="b" style="left:1229px;top:242px;width:1px;height:24px;background:#b5b5b5;"></div>
<div class="b" style="left:1229px;top:265px;width:24px;height:1px;background:#b5b5b5;"></div>
<svg class="i" style="left:635.5px;top:267px;" width="9" height="15" viewBox="0 0 9 15" fill="#757575" stroke="none" stroke-width="1" stroke-linecap="round" stroke-linejoin="round"><circle cx="2" cy="2.0" r="1.6"/><circle cx="2" cy="7.5" r="1.6"/><circle cx="2" cy="13.0" r="1.6"/><circle cx="7" cy="2.0" r="1.6"/><circle cx="7" cy="7.5" r="1.6"/><circle cx="7" cy="13.0" r="1.6"/></svg>
<span class="t" style="left:685px;top:266.0px;font-size:14px;line-height:20px;color:#9c9c9c;letter-spacing:.15px;">连续按下两次Ctrl键，唤起WPS AI</span>
<svg class="i" style="left:1907px;top:157px;" width="10" height="10" viewBox="0 0 10 10" fill="none" stroke="none" stroke-width="1" stroke-linecap="round" stroke-linejoin="round"><path d="M1.6 1.5 H8.4 L5 5 Z" fill="#777" stroke="none"/><path d="M1 8 H9" stroke="#777" stroke-width="2" stroke-linecap="butt"/><path d="M1.8 5.6 V8 M5 6.2 V8 M8.2 5.6 V8" stroke="#777" stroke-width="1.6" stroke-linecap="butt"/></svg>
<svg class="i" style="left:1908px;top:175px;" width="8" height="6" viewBox="0 0 8 6" fill="none" stroke="none" stroke-width="1" stroke-linecap="round" stroke-linejoin="round"><path d="M4 0.8 L7.2 5.2 H0.8 Z" fill="#777" stroke="none"/></svg>
<div class="b" style="left:1908px;top:190px;width:8px;height:562px;background:#d3d3d3;border-radius:4px;"></div>
<svg class="i" style="left:1908px;top:953px;" width="8" height="6" viewBox="0 0 8 6" fill="none" stroke="none" stroke-width="1" stroke-linecap="round" stroke-linejoin="round"><path d="M4 5.2 L7.2 0.8 H0.8 Z" fill="#777" stroke="none"/></svg>
<svg class="i" style="left:1908px;top:968px;" width="8" height="9" viewBox="0 0 8 9" fill="none" stroke="none" stroke-width="1" stroke-linecap="round" stroke-linejoin="round"><path d="M4 0.5 L7 4 H1 Z M4 4.5 L7 8 H1 Z" fill="#cfcfcf" stroke="none"/></svg>
<svg class="i" style="left:1908px;top:984px;" width="8" height="8" viewBox="0 0 8 8" fill="none" stroke="#cfcfcf" stroke-width="1" stroke-linecap="round" stroke-linejoin="round"><rect x="1.5" y="1.5" width="5" height="5" rx="1" stroke="#cfcfcf" stroke-width="1.2"/></svg>
<svg class="i" style="left:1908px;top:999.5px;" width="8" height="9" viewBox="0 0 8 9" fill="none" stroke="none" stroke-width="1" stroke-linecap="round" stroke-linejoin="round"><path d="M4 4 L7 0.5 H1 Z M4 8 L7 4.5 H1 Z" fill="#cfcfcf" stroke="none"/></svg>
<div class="b" style="left:0px;top:1016px;width:1920px;height:24px;background:#f0f0f0;border-top:1px solid #d6d6d6;"></div>
<span class="t" style="left:16px;top:1019.0px;font-size:12px;line-height:18px;color:#2a2a2a;letter-spacing:.3px;">页面: 1/1</span>
<div class="b" style="left:78px;top:1021px;width:1px;height:14px;background:#d6d6d6;"></div>
<span class="t" style="left:91px;top:1019.0px;font-size:12px;line-height:18px;color:#2a2a2a;">字数: 0</span>
<div class="b" style="left:141px;top:1021px;width:1px;height:14px;background:#d6d6d6;"></div>
<span class="t" style="left:154px;top:1019.0px;font-size:12px;line-height:18px;color:#2a2a2a;">拼写检查: 打开</span>
<svg class="i" style="left:239px;top:1025.5px;" width="8" height="6" viewBox="0 0 8 6" fill="none" stroke="#333" stroke-width="1.7000000000000002" stroke-linecap="round" stroke-linejoin="round"><path d="M1.85 1.85 L4.0 3.55 L6.15 1.85"/></svg>
<div class="b" style="left:261px;top:1021px;width:1px;height:14px;background:#d6d6d6;"></div>
<span class="t" style="left:274px;top:1019.0px;font-size:12px;line-height:18px;color:#2a2a2a;">校对</span>
<svg class="i" style="left:1399px;top:1020px;" width="16" height="15" viewBox="0 0 16 15" fill="none" stroke="#2f2f2f" stroke-width="1.2" stroke-linecap="round" stroke-linejoin="round"><path d="M1.2 7.5 C3.4 3.6 5.6 2.2 8 2.2 C10.4 2.2 12.6 3.6 14.8 7.5 C12.6 11.4 10.4 12.8 8 12.8 C5.6 12.8 3.4 11.4 1.2 7.5 Z"/><circle cx="8" cy="7.5" r="2.1"/></svg>
<div class="b" style="left:1427px;top:1021px;width:1px;height:14px;background:#d6d6d6;"></div>
<div class="b" style="left:1436px;top:1017px;width:24px;height:23px;background:#dadada;border-radius:4px 4px 0 0;"></div>
<svg class="i" style="left:1441px;top:1020px;" width="14" height="15" viewBox="0 0 14 15" fill="none" stroke="#2f2f2f" stroke-width="1.2" stroke-linecap="round" stroke-linejoin="round"><rect x="1.5" y="1.5" width="11" height="12" rx="0.8"/><path d="M4 5.5 H10 M4 8.5 H8"/></svg>
<svg class="i" style="left:1472px;top:1021px;" width="15" height="13" viewBox="0 0 15 13" fill="none" stroke="#2f2f2f" stroke-width="1.2" stroke-linecap="round" stroke-linejoin="round"><path d="M1.1 1.6 H2.1 M4.6 1.6 H14 M6.4 4.3 H12 M1.1 8.7 H2.1 M4.6 8.7 H14 M5.8 11.4 H12" stroke-linecap="butt"/></svg>
<svg class="i" style="left:1507px;top:1020px;" width="13" height="15" viewBox="0 0 13 15" fill="none" stroke="#2f2f2f" stroke-width="1.2" stroke-linecap="round" stroke-linejoin="round"><path d="M1.8 1.5 V13.5 L11.5 7.5 Z"/></svg>
<svg class="i" style="left:1537px;top:1020px;" width="15" height="15" viewBox="0 0 15 15" fill="none" stroke="#2f2f2f" stroke-width="1.1" stroke-linecap="round" stroke-linejoin="round"><circle cx="7.5" cy="7.5" r="6.2"/><path d="M1.3 7.5 H13.7 M7.5 1.3 C4 4.5 4 10.5 7.5 13.7 M7.5 1.3 C11 4.5 11 10.5 7.5 13.7"/></svg>
<svg class="i" style="left:1569px;top:1020px;" width="15" height="15" viewBox="0 0 15 15" fill="none" stroke="#2f2f2f" stroke-width="1.2" stroke-linecap="round" stroke-linejoin="round"><rect x="3.9" y="3.5" width="10.8" height="4.6" rx="1.9" transform="rotate(-45 9.2 5.8)"/><path d="M3.9 8 C2.8 9.8 2.2 11.6 1.3 13.7 C3.4 12.8 5.2 12.2 7 11.1"/></svg>
<div class="b" style="left:1596px;top:1021px;width:1px;height:14px;background:#d6d6d6;"></div>
<svg class="i" style="left:1610px;top:1020px;" width="15" height="15" viewBox="0 0 15 15" fill="none" stroke="#2f2f2f" stroke-width="1.3" stroke-linecap="round" stroke-linejoin="round"><path d="M1.5 5 V2.8 A1.3 1.3 0 0 1 2.8 1.5 H5 M10 1.5 H12.2 A1.3 1.3 0 0 1 13.5 2.8 V5 M13.5 10 V12.2 A1.3 1.3 0 0 1 12.2 13.5 H10 M5 13.5 H2.8 A1.3 1.3 0 0 1 1.5 12.2 V10"/><rect x="4.8" y="4.8" width="5.4" height="5.4" rx="0.6"/></svg>
<span class="t" style="left:1645px;top:1019.0px;font-size:12px;line-height:18px;color:#555;">100%</span>
<svg class="i" style="left:1687px;top:1025.5px;" width="8" height="6" viewBox="0 0 8 6" fill="none" stroke="#333" stroke-width="1.7000000000000002" stroke-linecap="round" stroke-linejoin="round"><path d="M1.85 1.85 L4.0 3.55 L6.15 1.85"/></svg>
<div class="b" style="left:1712px;top:1027px;width:12px;height:2px;background:#111;"></div>
<div class="b" style="left:1738px;top:1027px;width:52px;height:2px;background:#1f5fdd;border-radius:1px;"></div>
<div class="b" style="left:1794px;top:1027px;width:50px;height:2px;background:#b9b9b9;border-radius:1px;"></div>
<svg class="i" style="left:1785.5px;top:1022px;" width="12" height="12" viewBox="0 0 12 12" fill="none" stroke="none" stroke-width="1" stroke-linecap="round" stroke-linejoin="round"><circle cx="6" cy="6" r="5.4" fill="#fff" stroke="#e2e2e2" stroke-width="0.8"/><circle cx="6" cy="6" r="2.3" fill="#8a8a8a" stroke="none"/></svg>
<svg class="i" style="left:1858px;top:1022px;" width="12" height="12" viewBox="0 0 12 12" fill="none" stroke="#111" stroke-width="1.8" stroke-linecap="round" stroke-linejoin="round"><path d="M6.2 1 V11 M1.2 6 H11.2" stroke-linecap="butt"/></svg>
<svg class="i" style="left:1889px;top:1020px;" width="15" height="15" viewBox="0 0 15 15" fill="none" stroke="#2f2f2f" stroke-width="1.2" stroke-linecap="round" stroke-linejoin="round"><path d="M1.5 5 V2.8 A1.3 1.3 0 0 1 2.8 1.5 H5 M13.5 10 V12.2 A1.3 1.3 0 0 1 12.2 13.5 H10 M9.5 1.5 H13.5 V5.5 M13.5 1.5 L9 6 M5.5 13.5 H1.5 V9.5 M1.5 13.5 L6 9"/></svg>
</body></html>
